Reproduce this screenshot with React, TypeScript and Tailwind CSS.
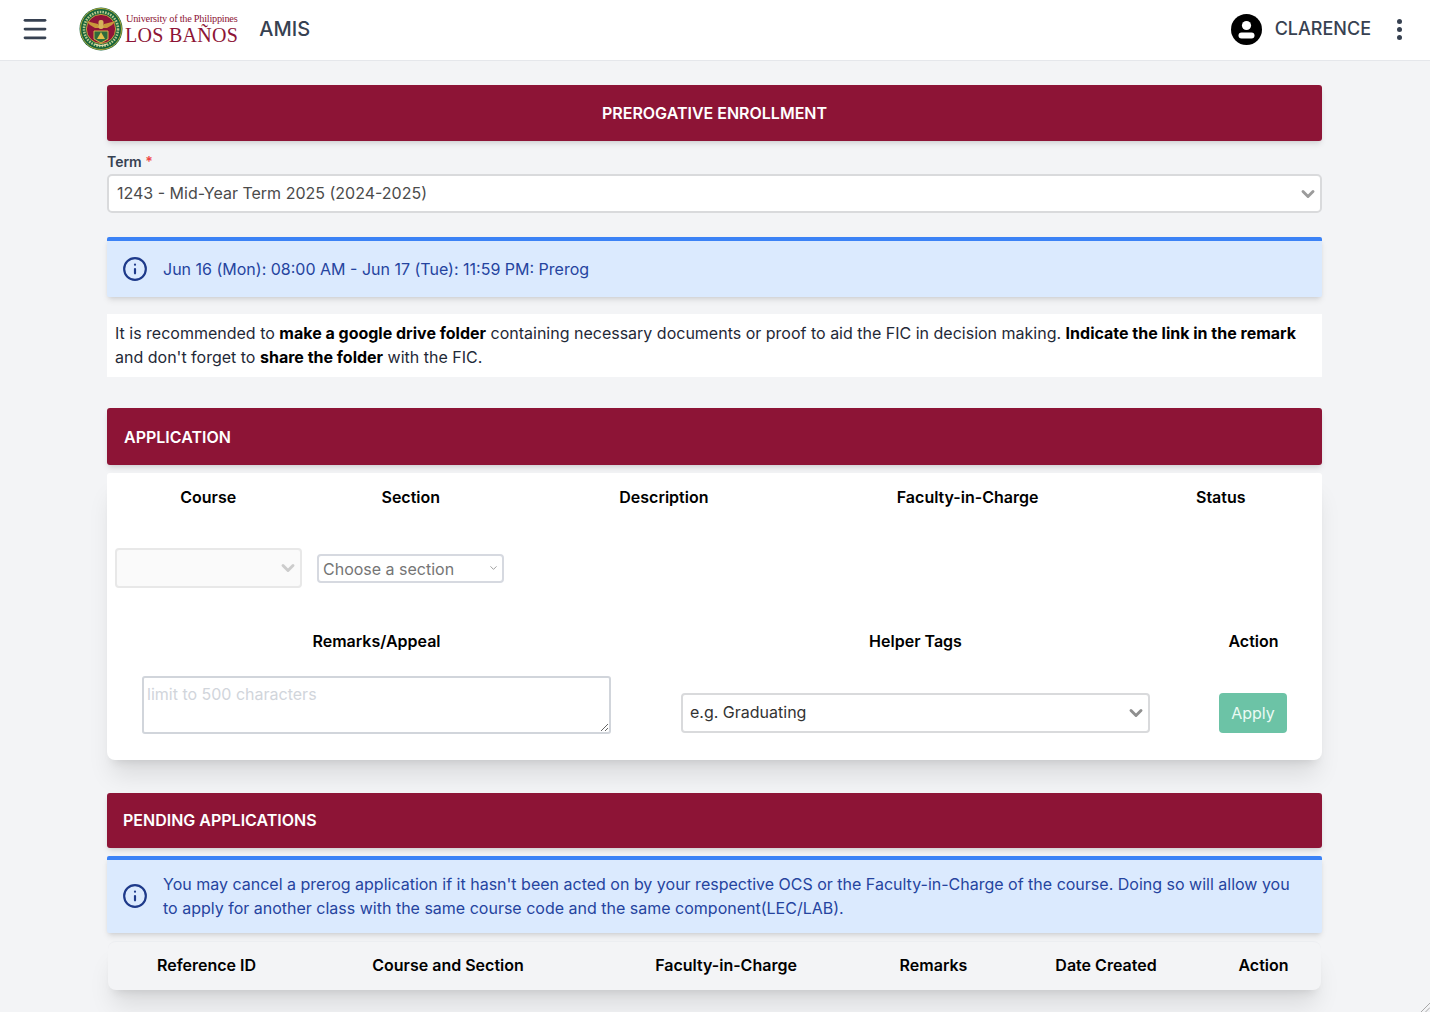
import { ChevronDown, Info, Menu } from 'lucide-react';

const maroon = 'bg-[#8d1436]';

function Seal() {
  return (
    <svg width="44" height="44" viewBox="0 0 44 44" className="shrink-0">
      <circle cx="22" cy="22" r="21.5" fill="#14633a" />
      <circle cx="22" cy="22" r="20.5" fill="none" stroke="#d9b73c" strokeWidth="0.8" />
      <circle cx="22" cy="22" r="17" fill="none" stroke="#b7c98c" strokeWidth="2.6" strokeDasharray="1.6 1.1" />
      <circle cx="22" cy="22" r="14.6" fill="#8f1438" stroke="#d9b73c" strokeWidth="0.8" />
      <path d="M7 14 L19 17 L21 21 L16 21 L11 18 Z" fill="#c9963a" />
      <path d="M37 14 L25 17 L23 21 L28 21 L33 18 Z" fill="#c9963a" />
      <rect x="19.5" y="13" width="5" height="9" rx="2" fill="#d7b35b" />
      <path d="M15 24 H29 V32 L22 36 L15 32 Z" fill="#2f6b3c" stroke="#e2c04b" strokeWidth="0.9" />
      <path d="M18 32 L22 25 L26 32 Z" fill="#e2c04b" />
      <path d="M16 37 Q22 40 28 37" fill="none" stroke="#e7dcb0" strokeWidth="1.2" />
    </svg>
  );
}

function Logo() {
  return (
    <div className="flex items-center gap-[2px]">
      <Seal />
      <div className="flex flex-col items-start font-['Liberation_Serif',serif] text-[#8d1436] leading-none">
        <span className="text-[10.3px] tracking-[-0.25px] leading-[12px] pl-px">University of the Philippines</span>
        <span className="text-[20px] tracking-[0.3px] leading-[20px]">LOS BAÑOS</span>
      </div>
    </div>
  );
}

function UserAvatar() {
  return (
    <svg width="31" height="31" viewBox="0 0 31 31">
      <circle cx="15.5" cy="15.5" r="15.5" fill="#000" />
      <circle cx="15.5" cy="11.5" r="4.6" fill="#fff" />
      <rect x="7.5" y="18.5" width="16" height="6" rx="3" fill="#fff" />
    </svg>
  );
}

function SectionBar({ title, className }: { title: string; className: string }) {
  return (
    <div className={`${maroon} rounded-[3px] shadow-md flex items-center text-white font-semibold text-base ${className}`}>
      {title}
    </div>
  );
}

function Notice({ children, className }: { children: React.ReactNode; className: string }) {
  return (
    <div className={`bg-[#dbeafe] border-t-4 border-[#3b82f6] shadow-md flex items-center text-[#25449f] pl-[15px] pr-6 rounded-[2px] ${className}`}>
      <Info size={26} strokeWidth={2} className="shrink-0 text-[#1e3a8a] mr-[15px]" />
      <div className="leading-6">{children}</div>
    </div>
  );
}

function Picker({ label, className, selectClass, chevron, disabled }: { label: string; className: string; selectClass: string; chevron: string; disabled?: boolean }) {
  return (
    <div className={`relative ${className}`}>
      <select
        disabled={disabled}
        defaultValue={label}
        className={`appearance-none w-full h-full bg-transparent pr-8 outline-none text-inherit ${selectClass}`}
      >
        <option value={label}>{label}</option>
      </select>
      <ChevronDown size={20} strokeWidth={3.5} className={`absolute right-[2px] top-1/2 -translate-y-1/2 pointer-events-none ${chevron}`} />
    </div>
  );
}

export default function App() {
  return (
    <div className="relative h-screen overflow-hidden bg-[#f3f4f6] font-['Inter',sans-serif] text-base text-black">
      <header className="h-[61px] pb-[2px] bg-white border-b border-[#e5e7eb] flex items-center pl-[20px] pr-[28px]">
        <Menu size={30} strokeWidth={2.2} className="text-[#374151]" />
        <div className="ml-[29px]">
          <Logo />
        </div>
        <span className="ml-[21px] text-xl font-medium text-[#374151]">AMIS</span>
        <div className="ml-auto flex items-center">
          <UserAvatar />
          <span className="ml-[13px] text-lg font-medium text-[#374151]">CLARENCE</span>
          <div className="ml-[26px] flex flex-col gap-[3px]">
            <span className="w-[5px] h-[5px] rounded-full bg-[#374151]" />
            <span className="w-[5px] h-[5px] rounded-full bg-[#374151]" />
            <span className="w-[5px] h-[5px] rounded-full bg-[#374151]" />
          </div>
        </div>
      </header>

      <main className="w-[1215px] ml-[107px] pt-[24px]">
        <SectionBar title="PREROGATIVE ENROLLMENT" className="justify-center h-14" />

        <div className="mt-[10px] text-sm font-semibold text-[#374151] leading-[21px]">
          Term <span className="text-[#ef4444]">*</span>
        </div>
        <Picker
          label="1243 - Mid-Year Term 2025 (2024-2025)"
          className="mt-[2px] h-[39px] bg-white border-2 border-[#d9dadc] rounded-[5px] text-[#4b4b4b]"
          selectClass="pl-[8px] pb-[2px]"
          chevron="text-[#9b9b9b]"
        />

        <Notice className="mt-[24px] h-[60px]">Jun 16 (Mon): 08:00 AM - Jun 17 (Tue): 11:59 PM: Prerog</Notice>

        <p className="mt-[17px] h-[63px] bg-white px-2 py-[7px] leading-6 text-[#1f2937]">
          It is recommended to <b className="text-black">make a google drive folder</b> containing necessary documents or proof to aid the FIC in decision making. <b className="text-black">Indicate the link in the remark</b> and don't forget to <b className="text-black">share the folder</b> with the FIC.
        </p>

        <SectionBar title="APPLICATION" className="mt-[31px] px-[17px] h-[57px]" />

        <section className="mt-[8px] h-[287px] bg-white rounded-b-lg rounded-t-[3px] shadow-xl">
          <div className="grid grid-cols-12 font-semibold text-center h-[75px] pt-[12px] leading-6">
            <div className="col-span-2">Course</div>
            <div className="col-span-2">Section</div>
            <div className="col-span-3">Description</div>
            <div className="col-span-3">Faculty-in-Charge</div>
            <div className="col-span-2">Status</div>
          </div>

          <div className="flex items-center h-[40px] pl-[8px] gap-[15px]">
            <Picker label="" disabled className="w-[187px] h-[40px] bg-[#fafafa] border-2 border-[#e8e8e8] rounded-[4px]" selectClass="pl-[8px]" chevron="text-[#cccccc]" />
            <div className="relative w-[187px] h-[29px] bg-white border-2 border-[#d6d9e0] rounded-[4px] text-[#757575]">
              <select defaultValue="Choose a section" className="appearance-none w-full h-full bg-transparent pl-[4px] pt-[2px] outline-none leading-none">
                <option>Choose a section</option>
              </select>
              <ChevronDown size={11} strokeWidth={1.8} className="absolute right-[3px] top-1/2 -translate-y-1/2 pointer-events-none text-[#8a8a8a]" />
            </div>
          </div>

          <div className="grid grid-cols-[539px_539px_1fr] text-center font-semibold leading-6 mt-[41px]">
            <div>Remarks/Appeal</div>
            <div>Helper Tags</div>
            <div>Action</div>
          </div>

          <div className="grid grid-cols-[539px_539px_1fr] mt-[23px]">
            <div className="px-[35px]">
              <textarea
                placeholder="limit to 500 characters"
                className="block w-[469px] h-[58px] bg-white border-2 border-[#d1d5db] rounded-[3px] px-[3px] py-[4px] leading-[24px] outline-none placeholder:text-[#d1d5db]"
              />
            </div>
            <div className="px-[35px] pt-[17px]">
              <Picker label="e.g. Graduating" className="w-[469px] h-[40px] bg-white border-2 border-[#d9dadc] rounded-[4px] text-[#333333]" selectClass="pl-[7px] pb-[2px]" chevron="text-[#8f8f8f]" />
            </div>
            <div className="pt-[17px] pl-[34px]">
              <button className="w-[68px] h-[40px] rounded-[4px] bg-[#6cc3a6] text-[#eafaf4]">Apply</button>
            </div>
          </div>
        </section>

        <SectionBar title="PENDING APPLICATIONS" className="mt-[33px] px-4 pb-[2px] h-[55px]" />

        <Notice className="mt-[8px] h-[77px] pb-[2px]">
          You may cancel a prerog application if it hasn't been acted on by your respective OCS or the Faculty-in-Charge of the course. Doing so will allow you to apply for another class with the same course code and the same component(LEC/LAB).
        </Notice>

        <div className="mx-px mt-[8px] h-[49px] pb-[2px] bg-[#f3f4f6] rounded-lg border-t border-[#eceef1] shadow-xl grid grid-cols-[197px_286px_270px_145px_200px_1fr] items-center text-center font-semibold">
          <div>Reference ID</div>
          <div>Course and Section</div>
          <div>Faculty-in-Charge</div>
          <div>Remarks</div>
          <div>Date Created</div>
          <div>Action</div>
        </div>
      </main>

      <svg width="9" height="9" viewBox="0 0 9 9" className="absolute right-0 bottom-0 text-[#a8a8a8]">
        <path d="M0 9 L9 0 M4.5 9 L9 4.5" stroke="currentColor" strokeWidth="1" />
      </svg>
    </div>
  );
}
